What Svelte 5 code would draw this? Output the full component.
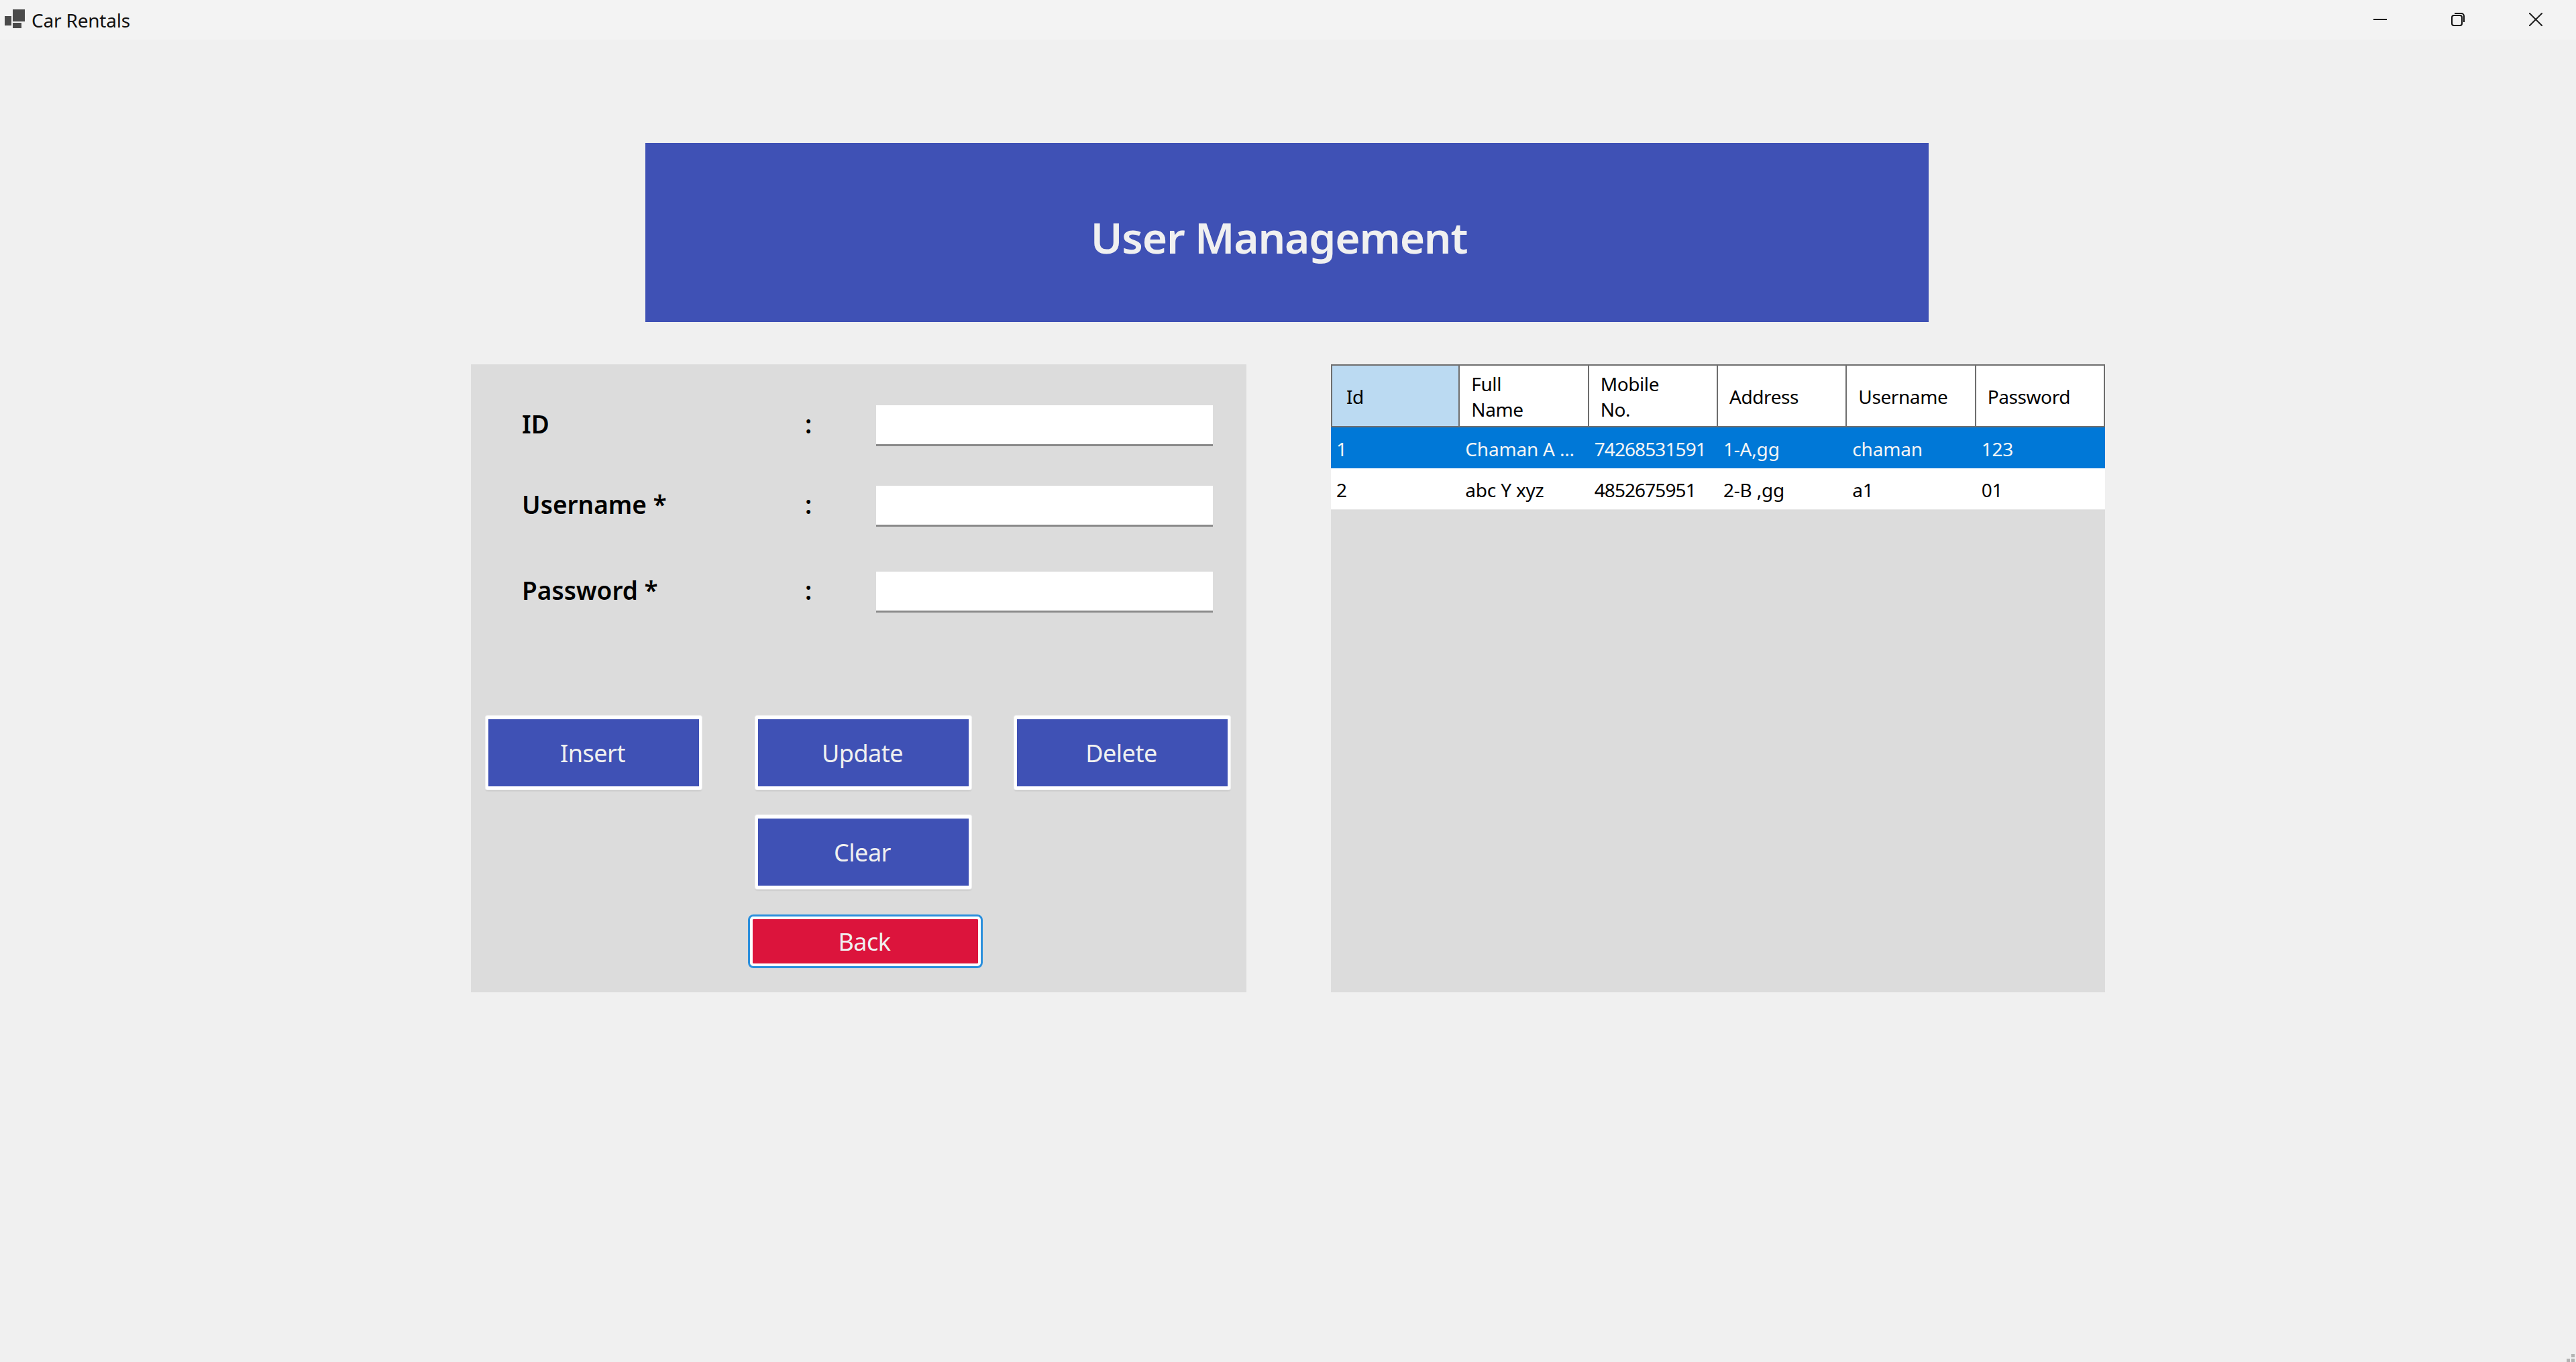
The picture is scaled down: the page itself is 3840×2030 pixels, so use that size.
<script>
  let columns = [["Id"], ["Full", "Name"], ["Mobile", "No."], ["Address"], ["Username"], ["Password"]];
  let users = [
    { id: 1, name: "Chaman A ...", mobile: "74268531591", address: "1-A,gg", username: "chaman", password: "123" },
    { id: 2, name: "abc Y xyz", mobile: "4852675951", address: "2-B ,gg", username: "a1", password: "01" },
  ];
  let selected = $state(1);
</script>

<div class="window">
  <!-- Title bar -->
  <header class="titlebar">
    <div class="app-title">
      <svg class="app-icon" viewBox="0 0 30 28" fill="#4a4a4a">
        <rect x="0" y="10" width="10" height="14"></rect>
        <rect x="12" y="0" width="18" height="18"></rect>
        <rect x="12" y="20" width="13" height="8"></rect>
      </svg>
      <span>Car Rentals</span>
    </div>
    <div class="controls">
      <button class="control" aria-label="Minimize">
        <svg viewBox="0 0 20 20" fill="none" stroke="#111" stroke-width="2">
          <line x1="0" y1="10" x2="20" y2="10"></line>
        </svg>
      </button>
      <button class="control" aria-label="Restore">
        <svg viewBox="0 0 20 20" fill="none" stroke="#111" stroke-width="2">
          <rect x="1" y="4" width="15" height="15" rx="3"></rect>
          <path d="M5 1h10a4 4 0 0 1 4 4v9"></path>
        </svg>
      </button>
      <button class="control" aria-label="Close">
        <svg viewBox="0 0 20 20" fill="none" stroke="#222" stroke-width="2">
          <line x1="0" y1="0" x2="20" y2="20"></line>
          <line x1="20" y1="0" x2="0" y2="20"></line>
        </svg>
      </button>
    </div>
  </header>

  <main class="content">
    <div class="banner">
      <h1>User Management</h1>
    </div>

    <div class="panels">
      <!-- Form -->
      <section class="form-panel">
        <div class="row">
          <span class="label">ID</span>
          <span class="label colon">:</span>
          <input type="text" />
        </div>
        <div class="row">
          <span class="label">Username *</span>
          <span class="label colon">:</span>
          <input type="text" />
        </div>
        <div class="row password">
          <span class="label">Password *</span>
          <span class="label colon">:</span>
          <input type="text" />
        </div>

        <div class="actions">
          <button class="btn insert">Insert</button>
          <button class="btn update">Update</button>
          <button class="btn delete">Delete</button>
          <button class="btn clear">Clear</button>
          <button class="btn back">Back</button>
        </div>
      </section>

      <!-- Grid -->
      <section class="grid-panel">
        <table>
          <thead>
            <tr>
              {#each columns as lines, i}
                <th class:current={i === 0}>
                  {#each lines as line}
                    <div>{line}</div>
                  {/each}
                </th>
              {/each}
            </tr>
          </thead>
          <tbody>
            {#each users as user}
              <tr class:selected={user.id === selected} onclick={() => (selected = user.id)}>
                <td>{user.id}</td>
                <td>{user.name}</td>
                <td class="digits">{user.mobile}</td>
                <td>{user.address}</td>
                <td>{user.username}</td>
                <td>{user.password}</td>
              </tr>
            {/each}
          </tbody>
        </table>
      </section>
    </div>
  </main>

  <!-- Resize grip -->
  <svg class="grip" viewBox="0 0 14 14" fill="#b4b4b4">
    <rect x="7" y="0" width="5" height="5"></rect>
    <rect x="0" y="7" width="5" height="5"></rect>
    <rect x="7" y="7" width="5" height="5"></rect>
  </svg>
</div>

<style>
  :global(body) {
    margin: 0;
    background: #f0f0f0;
  }

  .window {
    position: relative;
    height: 2030px;
    overflow: hidden;
    font-family: "Noto Sans", "Open Sans", sans-serif;
    color: #000;
  }

  .titlebar {
    height: 59px;
    background: #f3f3f3;
    display: flex;
    justify-content: space-between;
    align-items: center;
  }

  .app-title {
    display: flex;
    align-items: center;
    gap: 10px;
    padding-left: 7px;
    font-size: 28px;
    letter-spacing: -0.2px;
    color: #111;
  }

  .app-icon {
    width: 30px;
    height: 28px;
    margin-top: -4px;
  }

  .controls {
    display: flex;
    padding-right: 2px;
  }

  .control {
    width: 116px;
    height: 59px;
    display: flex;
    align-items: center;
    justify-content: center;
    border: none;
    background: transparent;
    padding: 0;
  }

  .control svg {
    width: 20px;
    height: 20px;
    margin-bottom: 2px;
  }

  .content {
    padding-top: 154px;
  }

  .banner {
    width: 1913px;
    height: 267px;
    margin-left: 962px;
    background: #3f51b5;
    display: flex;
    align-items: center;
    justify-content: center;
    padding: 14px 24px 0 0;
    box-sizing: border-box;
  }

  h1 {
    margin: 0;
    font-size: 64px;
    font-weight: 600;
    letter-spacing: -1.2px;
    color: #f0f0f0;
  }

  .panels {
    display: flex;
    justify-content: center;
    gap: 126px;
    margin-top: 63px;
  }

  .form-panel {
    width: 1156px;
    height: 936px;
    background: #dcdcdc;
    box-sizing: border-box;
    padding-top: 61px;
  }

  .row {
    display: grid;
    grid-template-columns: 422px 106px 502px;
    align-items: center;
    height: 61px;
    padding-left: 76px;
    margin-bottom: 59px;
  }

  .row.password {
    margin-top: 67px;
    margin-bottom: 0;
  }

  .label {
    font-size: 37px;
    font-weight: 600;
    margin-top: -6px;
  }

  input {
    width: 502px;
    height: 61px;
    box-sizing: border-box;
    border: none;
    border-bottom: 3px solid #8a8a8a;
    background: #fff;
    outline: none;
  }

  .actions {
    display: grid;
    grid-template-columns: 322px 80px 322px 64px 322px;
    grid-auto-rows: 110px;
    row-gap: 38px;
    padding-left: 22px;
    margin-top: 154px;
  }

  .btn {
    box-sizing: border-box;
    border: solid #fff;
    border-width: 5px 4px;
    border-radius: 3px;
    background: #3f51b5;
    background-clip: padding-box;
    color: #f0f0f0;
    font-family: inherit;
    font-size: 36px;
    letter-spacing: -0.5px;
    padding: 0 3px 0 0;
    box-shadow: 0 0 1px 1px rgba(255, 255, 255, 0.7), 0 2px 2px rgba(0, 0, 0, 0.15);
  }

  .insert { grid-column: 1; }
  .update { grid-column: 3; }
  .delete { grid-column: 5; }
  .clear { grid-column: 3; grid-row: 2; }

  .back {
    grid-column: 3;
    grid-row: 3;
    width: 350px;
    height: 80px;
    margin-left: -11px;
    border-width: 7px;
    background: #dc143c;
    background-clip: padding-box;
    border-radius: 8px;
    box-shadow: none;
    outline: 3px solid #2b8fdc;
    outline-offset: -3px;
  }

  .grid-panel {
    width: 1154px;
    height: 936px;
    background: #dcdcdc;
    font-size: 28px;
  }

  table {
    width: 1154px;
    table-layout: fixed;
    border-collapse: separate;
    border-spacing: 0;
  }

  th {
    height: 94px;
    box-sizing: border-box;
    background: #fff;
    border: 2px solid #6e6e6e;
    border-left: none;
    font-weight: 400;
    text-align: left;
    line-height: 38px;
    letter-spacing: -0.4px;
    padding: 2px 10px 0 17px;
  }

  th:first-child {
    border-left: 2px solid #6e6e6e;
  }

  th.current {
    background: #bbdaf2;
    padding-left: 21px;
  }

  td {
    height: 62px;
    box-sizing: border-box;
    background: #fff;
    padding: 3px 0 0 8px;
    letter-spacing: -0.2px;
    white-space: nowrap;
    border-bottom: 1px solid #e6e6e6;
  }

  td.digits {
    letter-spacing: -0.9px;
  }

  tr.selected td {
    height: 61px;
    background: #0078d7;
    color: #f5f5f5;
    border-bottom-color: #0078d7;
  }

  .grip {
    position: absolute;
    right: 0;
    bottom: -2px;
    width: 14px;
    height: 14px;
  }
</style>
